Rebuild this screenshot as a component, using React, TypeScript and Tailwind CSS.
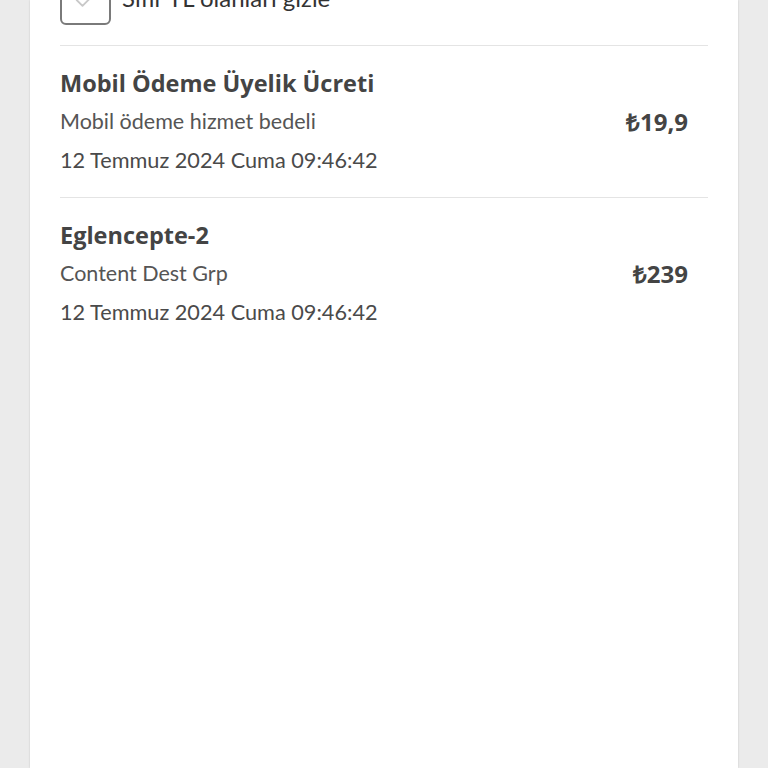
import React from 'react'

type Charge = {
    title: string
    detail: string
    date: string
    amount: string
}

const charges: Charge[] = [
    {
        title: 'Mobil Ödeme Üyelik Ücreti',
        detail: 'Mobil ödeme hizmet bedeli',
        date: '12 Temmuz 2024 Cuma 09:46:42',
        amount: '₺19,9',
    },
    {
        title: 'Eglencepte-2',
        detail: 'Content Dest Grp',
        date: '12 Temmuz 2024 Cuma 09:46:42',
        amount: '₺239',
    },
]

const ChargeRow = ({ item, last }: { item: Charge; last: boolean }) => (
    <div className={`flex items-center justify-between pt-[18px] pb-[18px] pr-[20px] ${last ? '' : 'border-b border-[#e4e4e4]'}`}>
        <div className="flex flex-col">
            <span className="text-[23.5px] leading-[38px] font-bold text-[#444444]" style={{ fontFamily: '"Open Sans", sans-serif' }}>
                {item.title}
            </span>
            <span className="text-[21.5px] leading-[39px] text-[#555555]">{item.detail}</span>
            <span className="text-[21.7px] leading-[38px] text-[#4a4a4a]">{item.date}</span>
        </div>
        <span className="text-[24px] font-bold text-[#444444]" style={{ fontFamily: '"Open Sans", sans-serif' }}>
            {item.amount}
        </span>
    </div>
)

export default function App() {
    return (
        <div className="h-[768px] overflow-hidden bg-[#ebebeb] px-[30px]" style={{ fontFamily: 'Lato, "Noto Sans", sans-serif' }}>
            <div className="flex h-full flex-col bg-white px-[30px] shadow-[0_0_2px_rgba(0,0,0,0.15)]">
                {/* hide-zero filter */}
                <div className="-mt-[26px] flex items-center gap-[11px] border-b border-[#e4e4e4] pb-[20px]">
                    <div className="flex h-[51px] w-[51px] items-center justify-center rounded-[6px] border-2 border-[#7a7a7a]">
                        <svg width="28" height="28" viewBox="0 0 24 24" fill="none" stroke="#c8c8c8" strokeWidth="1.6" strokeLinecap="round" strokeLinejoin="round">
                            <path d="M4 12l5 5 11-11" />
                        </svg>
                    </div>
                    <span className="-mt-[4px] text-[24px] text-[#333333]">Sıfır TL olanları gizle</span>
                </div>

                {charges.map((c, i) => (
                    <ChargeRow key={i} item={c} last={i === charges.length - 1} />
                ))}
            </div>
        </div>
    )
}
